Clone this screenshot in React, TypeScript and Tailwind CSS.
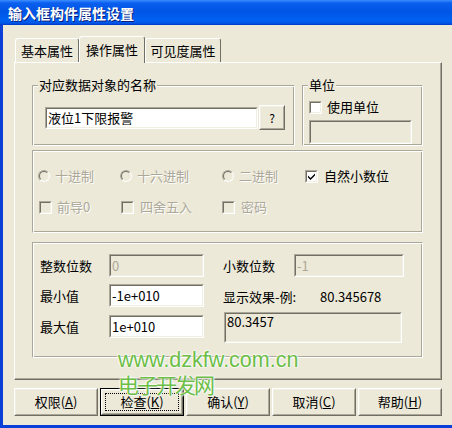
import React from "react";

const FONT = { fontFamily: '"Noto Sans CJK SC", "Noto Sans", sans-serif' };

function Sunken({ className = "", inner = "", children }: { className?: string; inner?: string; children?: React.ReactNode }) {
  return (
    <div className={`border border-t-[#ACA899] border-l-[#ACA899] border-r-white border-b-white ${className}`}>
      <div className={`h-full w-full border border-t-[#716F64] border-l-[#716F64] border-r-[#F1EFE2] border-b-[#F1EFE2] flex items-center px-[1px] ${inner}`}>
        {children}
      </div>
    </div>
  );
}

function Group({ className = "", label, children }: { className?: string; label?: string; children?: React.ReactNode }) {
  return (
    <div className={`relative border border-t-[#ACA899] border-l-[#ACA899] border-r-white border-b-white shadow-[inset_1px_1px_0_#fff,inset_-1px_-1px_0_#ACA899] ${className}`}>
      {label && (
        <span className="absolute -top-[9px] left-[5px] bg-[#ECE9D8] px-[1px] text-[13px] leading-[16px] text-black">{label}</span>
      )}
      {children}
    </div>
  );
}

function Radio({ label }: { label: string }) {
  return (
    <div className="flex items-center gap-[5px]">
      <div className="w-[12px] h-[12px] rounded-full border border-t-[#ACA899] border-l-[#ACA899] border-r-white border-b-white">
        <div className="w-full h-full rounded-full border border-t-[#716F64] border-l-[#716F64] border-r-[#F1EFE2] border-b-[#F1EFE2]" />
      </div>
      <span className="text-[13px] leading-[16px] text-[#ACA899] [text-shadow:1px_1px_0_#fff]">{label}</span>
    </div>
  );
}

function Check({ label, checked = false, disabled = false, gap = "gap-[5px]" }: { label: string; checked?: boolean; disabled?: boolean; gap?: string }) {
  return (
    <div className={`flex items-center ${gap}`}>
      <div className="w-[13px] h-[13px] border border-t-[#ACA899] border-l-[#ACA899] border-r-white border-b-white">
        <div className={`w-full h-full border border-t-[#716F64] border-l-[#716F64] border-r-[#F1EFE2] border-b-[#F1EFE2] flex items-center justify-center ${disabled ? "bg-[#ECE9D8]" : "bg-white"}`}>
          {checked && (
            <svg width="7" height="7" viewBox="0 0 7 7">
              <polygon points="0,2.5 2.5,5 7,0.5 7,2.5 2.5,7 0,4.5" fill="#000" />
            </svg>
          )}
        </div>
      </div>
      <span className={`text-[13px] leading-[16px] ${disabled ? "text-[#ACA899] [text-shadow:1px_1px_0_#fff]" : "text-black"}`}>{label}</span>
    </div>
  );
}

function Button({ children, isDefault = false, size = "w-[84px] h-[28px]" }: { children: React.ReactNode; isDefault?: boolean; size?: string }) {
  return (
    <div className={`${size} ${isDefault ? "border border-black" : ""}`}>
      <div className="h-full w-full border border-t-white border-l-white border-r-[#716F64] border-b-[#716F64] bg-[#ECE9D8]">
        <div className="h-full w-full border border-t-[#F1EFE2] border-l-[#F1EFE2] border-r-[#ACA899] border-b-[#ACA899] flex p-[2px]">
          <div className={`flex-1 flex items-center justify-center text-[13px] leading-[16px] text-black ${isDefault ? "border border-dotted border-black" : ""}`}>
            {children}
          </div>
        </div>
      </div>
    </div>
  );
}

export default function App() {
  return (
    <div className="relative w-[452px] h-[428px] overflow-hidden bg-[#0A40D8] flex flex-col" style={FONT}>
      {/* title bar */}
      <div className="h-[25px] shrink-0 flex items-center pl-[8px] bg-[linear-gradient(to_bottom,#3C8EFF_0%,#0B5FEF_12%,#0055E5_45%,#0060F2_80%,#0058E8_92%,#0037C8_100%)]">
        <span className="text-white font-bold text-[14px] leading-[18px] [text-shadow:1px_1px_0_#0A1E78]">输入框构件属性设置</span>
      </div>
      {/* body */}
      <div className="ml-[3px] h-[400px] bg-[#ECE9D8] pl-[11px] pt-[11px] flex flex-col">
        {/* tabs */}
        <div className="h-[26px] flex items-end pl-[1px]">
          <div className="w-[64px] h-[24px] border-t border-l border-t-white border-l-white border-r border-r-[#716F64] rounded-t-[3px] flex items-center justify-center text-[13px] leading-[16px] text-black pt-[1px]">基本属性</div>
          <div className="relative z-10 -mb-[1px] w-[66px] h-[27px] bg-[#ECE9D8] border-t border-l border-t-white border-l-white border-r border-r-[#716F64] rounded-t-[3px] flex items-center justify-center text-[13px] leading-[16px] text-black pb-[1px]">操作属性</div>
          <div className="w-[76px] h-[24px] border-t border-l border-t-white border-l-white border-r border-r-[#716F64] rounded-t-[3px] flex items-center justify-center text-[13px] leading-[16px] text-black pt-[1px]">可见度属性</div>
        </div>
        {/* panel */}
        <div className="w-[428px] h-[318px] border border-t-white border-l-white border-r-[#716F64] border-b-[#716F64] shadow-[inset_-1px_-1px_0_#ACA899] pl-[17px] pt-[22px] flex flex-col">
          {/* row A */}
          <div className="flex gap-[7px] h-[61px]">
            <Group className="w-[263px] h-[61px] pl-[12px] pt-[19px]" label="对应数据对象的名称">
              <div className="flex items-center">
                <Sunken className="w-[213px] h-[22px] bg-white">
                  <span className="text-[13px] leading-[16px] text-black">液位1下限报警</span>
                </Sunken>
                <div className="ml-[1px]">
                  <Button size="w-[26px] h-[25px]">
                    <span className="text-[12px]">?</span>
                  </Button>
                </div>
              </div>
            </Group>
            <Group className="w-[121px] h-[61px] pl-[6px] pt-[13px]" label="单位">
              <Check label="使用单位" />
              <Sunken className="mt-[5px] w-[103px] h-[24px] bg-[#ECE9D8]" />
            </Group>
          </div>
          {/* row B */}
          <Group className="mt-[4px] w-[391px] h-[83px] pl-[5px] pt-[17px]">
            <div className="grid grid-cols-[82px_102px_83px_auto] h-[16px] items-center">
              <Radio label="十进制" />
              <Radio label="十六进制" />
              <Radio label="二进制" />
              <Check label="自然小数位" checked gap="gap-[6px]" />
            </div>
            <div className="mt-[15px] grid grid-cols-[82px_101px_84px_auto] h-[16px] items-center pl-[1px]">
              <Check label="前导0" disabled />
              <Check label="四舍五入" disabled gap="gap-[6px]" />
              <Check label="密码" disabled gap="gap-[6px]" />
            </div>
          </Group>
          {/* row C */}
          <Group className="mt-[9px] w-[391px] h-[116px] pl-[7px] pt-[11px] flex">
            <div className="flex flex-col">
              <div className="flex items-center h-[23px]">
                <span className="w-[69px] text-[13px] leading-[16px] text-black">整数位数</span>
                <Sunken className="w-[95px] h-[23px] bg-[#ECE9D8]">
                  <span className="text-[13px] leading-[16px] text-[#ACA899]">0</span>
                </Sunken>
              </div>
              <div className="flex items-center h-[23px] mt-[7px]">
                <span className="w-[69px] text-[13px] leading-[16px] text-black">最小值</span>
                <Sunken className="w-[95px] h-[23px] bg-white">
                  <span className="text-[13px] leading-[16px] text-black">-1e+010</span>
                </Sunken>
              </div>
              <div className="flex items-center h-[23px] mt-[8px]">
                <span className="w-[69px] text-[13px] leading-[16px] text-black">最大值</span>
                <Sunken className="w-[95px] h-[23px] bg-white">
                  <span className="text-[13px] leading-[16px] text-black">1e+010</span>
                </Sunken>
              </div>
            </div>
            <div className="flex flex-col ml-[19px]">
              <div className="flex items-center h-[23px]">
                <span className="w-[71px] text-[13px] leading-[16px] text-black">小数位数</span>
                <Sunken className="w-[110px] h-[23px] bg-[#ECE9D8]">
                  <span className="text-[13px] leading-[16px] text-[#ACA899]">-1</span>
                </Sunken>
              </div>
              <div className="flex items-center h-[16px] mt-[12px]">
                <span className="w-[97px] text-[13px] leading-[16px] text-black">显示效果-例:</span>
                <span className="text-[13px] leading-[16px] text-black">80.345678</span>
              </div>
              <Sunken className="mt-[7px] ml-[1px] w-[178px] h-[31px] bg-[#ECE9D8]" inner="items-start">
                <span className="text-[13px] leading-[16px] text-black">80.3457</span>
              </Sunken>
            </div>
          </Group>
        </div>
        {/* buttons */}
        <div className="mt-[8px] flex gap-[2px]">
          <Button>权限(<u>A</u>)</Button>
          <Button isDefault>检查(<u>K</u>)</Button>
          <Button>确认(<u>Y</u>)</Button>
          <Button>取消(<u>C</u>)</Button>
          <Button>帮助(<u>H</u>)</Button>
        </div>
      </div>
      {/* watermark */}
      <div className="absolute left-[118px] top-[348px] pointer-events-none flex flex-col text-[#6CBE47] [text-shadow:0_0_2px_#fff,0_0_2px_#fff,0_0_3px_#fff]">
        <span className="text-[21.5px] leading-[24px]" style={{ fontFamily: '"Liberation Sans", Arial, sans-serif' }}>www.dzkfw.com.cn</span>
        <span className="text-[21px] leading-[24px] tracking-[-2px]" style={{ fontFamily: '"Noto Sans CJK SC", sans-serif' }}>电子开发网</span>
      </div>
    </div>
  );
}
